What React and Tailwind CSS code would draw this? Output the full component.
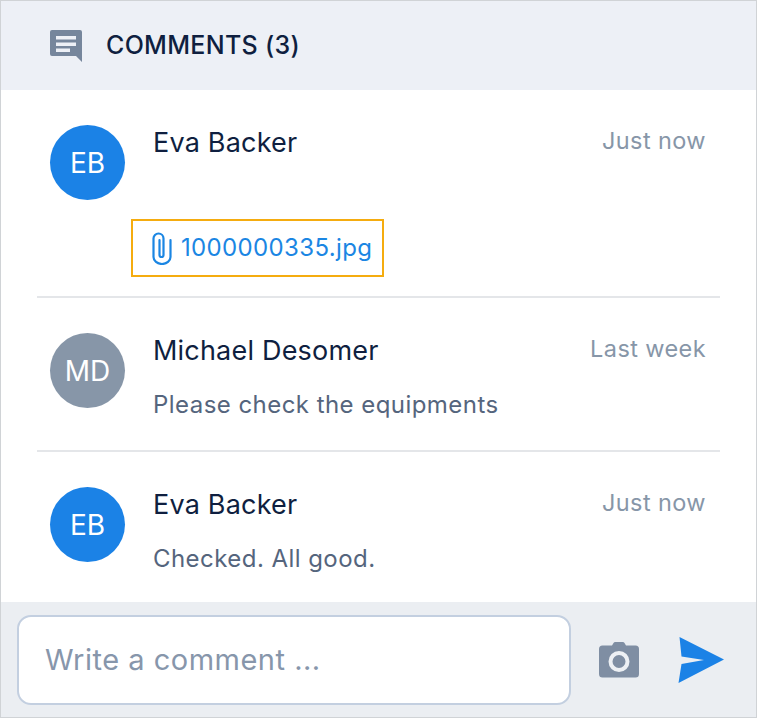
import React from 'react';

const font = { fontFamily: 'Inter, sans-serif' };

const CommentRow = ({ initials, name, time, avatarClass, children, className = '' }) => (
  <div className={`flex px-[13px] ${className}`}>
    <div className={`flex h-[75px] w-[75px] shrink-0 items-center justify-center rounded-full text-[28px] text-white ${avatarClass}`}>
      {initials}
    </div>
    <div className="ml-[28px] min-w-0 flex-1">
      <div className="flex items-start justify-between pr-[1px]">
        <span className="text-[27px] leading-[36px] tracking-[0.2px] text-[#0f1f40]">{name}</span>
        <span className="text-[23.5px] leading-[32px] tracking-[0.4px] text-[#8796a8]">{time}</span>
      </div>
      {children}
    </div>
  </div>
);

const CommentIcon = () => (
  <svg width="32" height="32" viewBox="0 0 32 32" fill="#76869c">
    <path d="M2 0h28a2 2 0 0 1 2 2v30l-6-6H2a2 2 0 0 1-2-2V2a2 2 0 0 1 2-2z" />
    <rect x="6" y="6" width="20" height="3.5" fill="#edf0f6" />
    <rect x="6" y="12.5" width="20" height="3.5" fill="#edf0f6" />
    <rect x="6" y="18.5" width="14" height="3.5" fill="#edf0f6" />
  </svg>
);

const ClipIcon = () => (
  <svg width="20" height="33" viewBox="0 0 20 33" fill="none" stroke="#1b86e3" strokeWidth="2.2" strokeLinecap="round">
    <path d="M18.5 8v17a8.5 7 0 0 1-17 0V6.5a5 5 0 0 1 10 0V23a2 2 0 0 1-4 0V8" />
  </svg>
);

const CameraIcon = () => (
  <svg width="40" height="36" viewBox="0 0 40 36">
    <path fill="#7f8ea3" d="M13 3.5 14.5 1a2 2 0 0 1 1.7-1h7.6a2 2 0 0 1 1.7 1L27 3.5h9.5A3.5 3.5 0 0 1 40 7v25a3.5 3.5 0 0 1-3.5 3.5h-33A3.5 3.5 0 0 1 0 32V7a3.5 3.5 0 0 1 3.5-3.5z" />
    <circle cx="20" cy="19.5" r="8.5" fill="#7f8ea3" stroke="#edf0f4" strokeWidth="4" />
  </svg>
);

const SendIcon = () => (
  <svg width="46" height="46" viewBox="0 0 46 46">
    <path fill="#1b82e6" d="M1.5 0 46 22.5 0.5 46 3.5 27 26 23 3.5 19.5z" />
  </svg>
);

export default function App() {
  return (
    <div style={font} className="flex h-[718px] w-[757px] flex-col overflow-hidden border border-[#d0d3d6] bg-white">
      <header className="flex h-[89px] shrink-0 items-center bg-[#edf0f6] pl-[49px]">
        <CommentIcon />
        <h1 className="ml-[24px] text-[25px] font-medium tracking-[0.3px] text-[#0f1f40]">COMMENTS (3)</h1>
      </header>

      <div className="flex-1 px-[36px]">
        <div className="h-[208px] border-b-2 border-[#e4e6e9] pt-[35px]">
          <CommentRow initials="EB" name="Eva Backer" time="Just now" avatarClass="bg-[#1b82e6]" />
          <a className="ml-[94px] mt-[19px] flex h-[58px] w-[253px] items-center border-2 border-[#f5ac0f] pl-[19px] text-[24px] tracking-[0.35px] text-[#1b86e3]">
            <ClipIcon />
            <span className="ml-[9px]">1000000335.jpg</span>
          </a>
        </div>
        <div className="h-[154px] border-b-2 border-[#e4e6e9] pt-[35px]">
          <CommentRow initials="MD" name="Michael Desomer" time="Last week" avatarClass="bg-[#8796a8]">
            <p className="mt-[20px] text-[24px] leading-[32px] tracking-[0.45px] text-[#55657d]">Please check the equipments</p>
          </CommentRow>
        </div>
        <div className="pt-[35px]">
          <CommentRow initials="EB" name="Eva Backer" time="Just now" avatarClass="bg-[#1b82e6]">
            <p className="mt-[20px] text-[24px] leading-[32px] tracking-[0.45px] text-[#55657d]">Checked. All good.</p>
          </CommentRow>
        </div>
      </div>

      <footer className="flex h-[115px] shrink-0 items-center bg-[#ebeef2] pl-[16px]">
        <input
          readOnly
          placeholder="Write a comment ..."
          style={font}
          className="h-[90px] w-[554px] rounded-[14px] border-2 border-[#c3cfe0] bg-white pl-[26px] text-[29px] tracking-[0.5px] outline-none placeholder:text-[#8796ab]"
        />
        <div className="ml-[28px]"><CameraIcon /></div>
        <div className="ml-[39px]"><SendIcon /></div>
      </footer>
    </div>
  );
}
